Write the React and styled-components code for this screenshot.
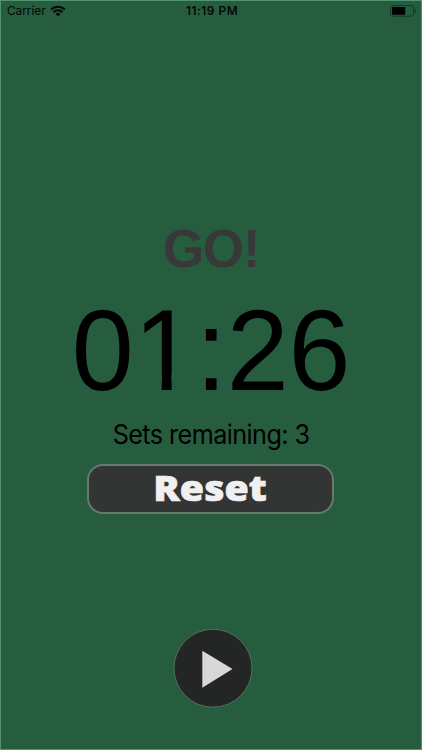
import React from 'react';
import styled, { createGlobalStyle } from 'styled-components';

const GlobalStyle = createGlobalStyle`
  * { box-sizing: border-box; }
  body { margin: 0; background: #265d3e; }
`;

const Screen = styled.main`
  display: flex;
  flex-direction: column;
  align-items: center;
  width: 422px;
  height: 750px;
  overflow: hidden;
  background: #265d3e;
  border: 1px solid #529471;
  color: #000;
  font-family: Inter, sans-serif;
`;

const StatusBar = styled.header`
  display: grid;
  grid-template-columns: 1fr auto 1fr;
  align-items: center;
  width: 100%;
  height: 20px;
  padding: 0 4px 0 6px;
  font-size: 11.8px;
  line-height: 20px;
  color: #020a05;
`;

const Carrier = styled.div`
  display: flex;
  align-items: center;
  gap: 4px;
  letter-spacing: 0;
`;

const Clock = styled.time`
  font-weight: 600;
  letter-spacing: 0.55px;
`;

const BatterySlot = styled.div`
  display: flex;
  justify-content: flex-end;
`;

const Phase = styled.h1`
  margin: 200px 0 0;
  height: 56px;
  font: 700 53px/56px "Liberation Sans", Arial, sans-serif;
  letter-spacing: -1.4px;
  color: #383838;
`;

const Countdown = styled.div`
  display: flex;
  height: 112px;
  margin-top: 18px;
  font: 400 112px/112px "Liberation Sans", Arial, sans-serif;
  white-space: nowrap;
  transform: scale(0.995, 1.03);
`;

/* Trims the foot serif so the one is a plain stem. */
const DigitOne = styled.span`
  clip-path: polygon(0 0, 100% 0, 100% 70%, 61.2% 70%, 61.2% 100%, 45.2% 100%, 45.2% 70%, 0 70%);
`;

const Sets = styled.p`
  margin: 10px 0 0;
  height: 34px;
  font-size: 26.4px;
  line-height: 34px;
  letter-spacing: -0.6px;
  white-space: nowrap;
  color: #000;
  transform: scaleX(0.955);
`;

const ResetButton = styled.button`
  display: flex;
  align-items: center;
  justify-content: center;
  width: 247px;
  height: 50px;
  margin: 13px 1px 0 0;
  padding: 0;
  border: 2px solid #68796d;
  border-radius: 16px;
  background: #333434;
  color: #f0f0f0;
  font: 800 36px/46px "Open Sans", sans-serif;
`;

const ResetLabel = styled.span`
  -webkit-text-stroke: 0.7px #f0f0f0;
  transform: translateY(-1px) scaleX(1.09);
`;

const PlayButton = styled.button`
  width: 80px;
  height: 80px;
  margin: 114px 0 0 4px;
  padding: 0;
  border: 0;
  background: none;
`;

const WifiIcon = () => (
  <svg width="16" height="12" viewBox="0 0 15 11" fill="none" stroke="#020a05" strokeWidth="1.9">
    <path d="M1.1 4.1a9.1 9.1 0 0 1 12.8 0" />
    <path d="M3.3 6.6a6 6 0 0 1 8.4 0" />
    <path d="M7.5 10.7 5.2 8.4a3.2 3.2 0 0 1 4.6 0z" fill="#020a05" stroke="none" />
  </svg>
);

const BatteryIcon = () => (
  <svg width="27" height="12" viewBox="0 0 27 12">
    <rect x="0.6" y="0.6" width="23" height="10.6" rx="2.4" fill="none" stroke="#123c25" />
    <rect x="2" y="2" width="13.2" height="7.8" rx="0.8" fill="#000" />
    <path d="M24.9 4v4q1.5-.5 1.5-2t-1.5-2z" fill="#123c25" />
  </svg>
);

const PlayIcon = () => (
  <svg width="80" height="80" viewBox="0 0 80 80">
    <circle cx="40" cy="40.2" r="39" fill="#242525" stroke="#5b6b61" />
    <path d="M29.3 22.8v37L59.5 41z" fill="#d8d8d8" />
  </svg>
);

export default function App() {
  return (
    <>
      <GlobalStyle />
      <Screen>
        <StatusBar>
          <Carrier>Carrier <WifiIcon /></Carrier>
          <Clock>11:19 PM</Clock>
          <BatterySlot><BatteryIcon /></BatterySlot>
        </StatusBar>
        <Phase>GO!</Phase>
        <Countdown>0<DigitOne>1</DigitOne>:26</Countdown>
        <Sets>Sets remaining: 3</Sets>
        <ResetButton><ResetLabel>Reset</ResetLabel></ResetButton>
        <PlayButton aria-label="Play"><PlayIcon /></PlayButton>
      </Screen>
    </>
  );
}
